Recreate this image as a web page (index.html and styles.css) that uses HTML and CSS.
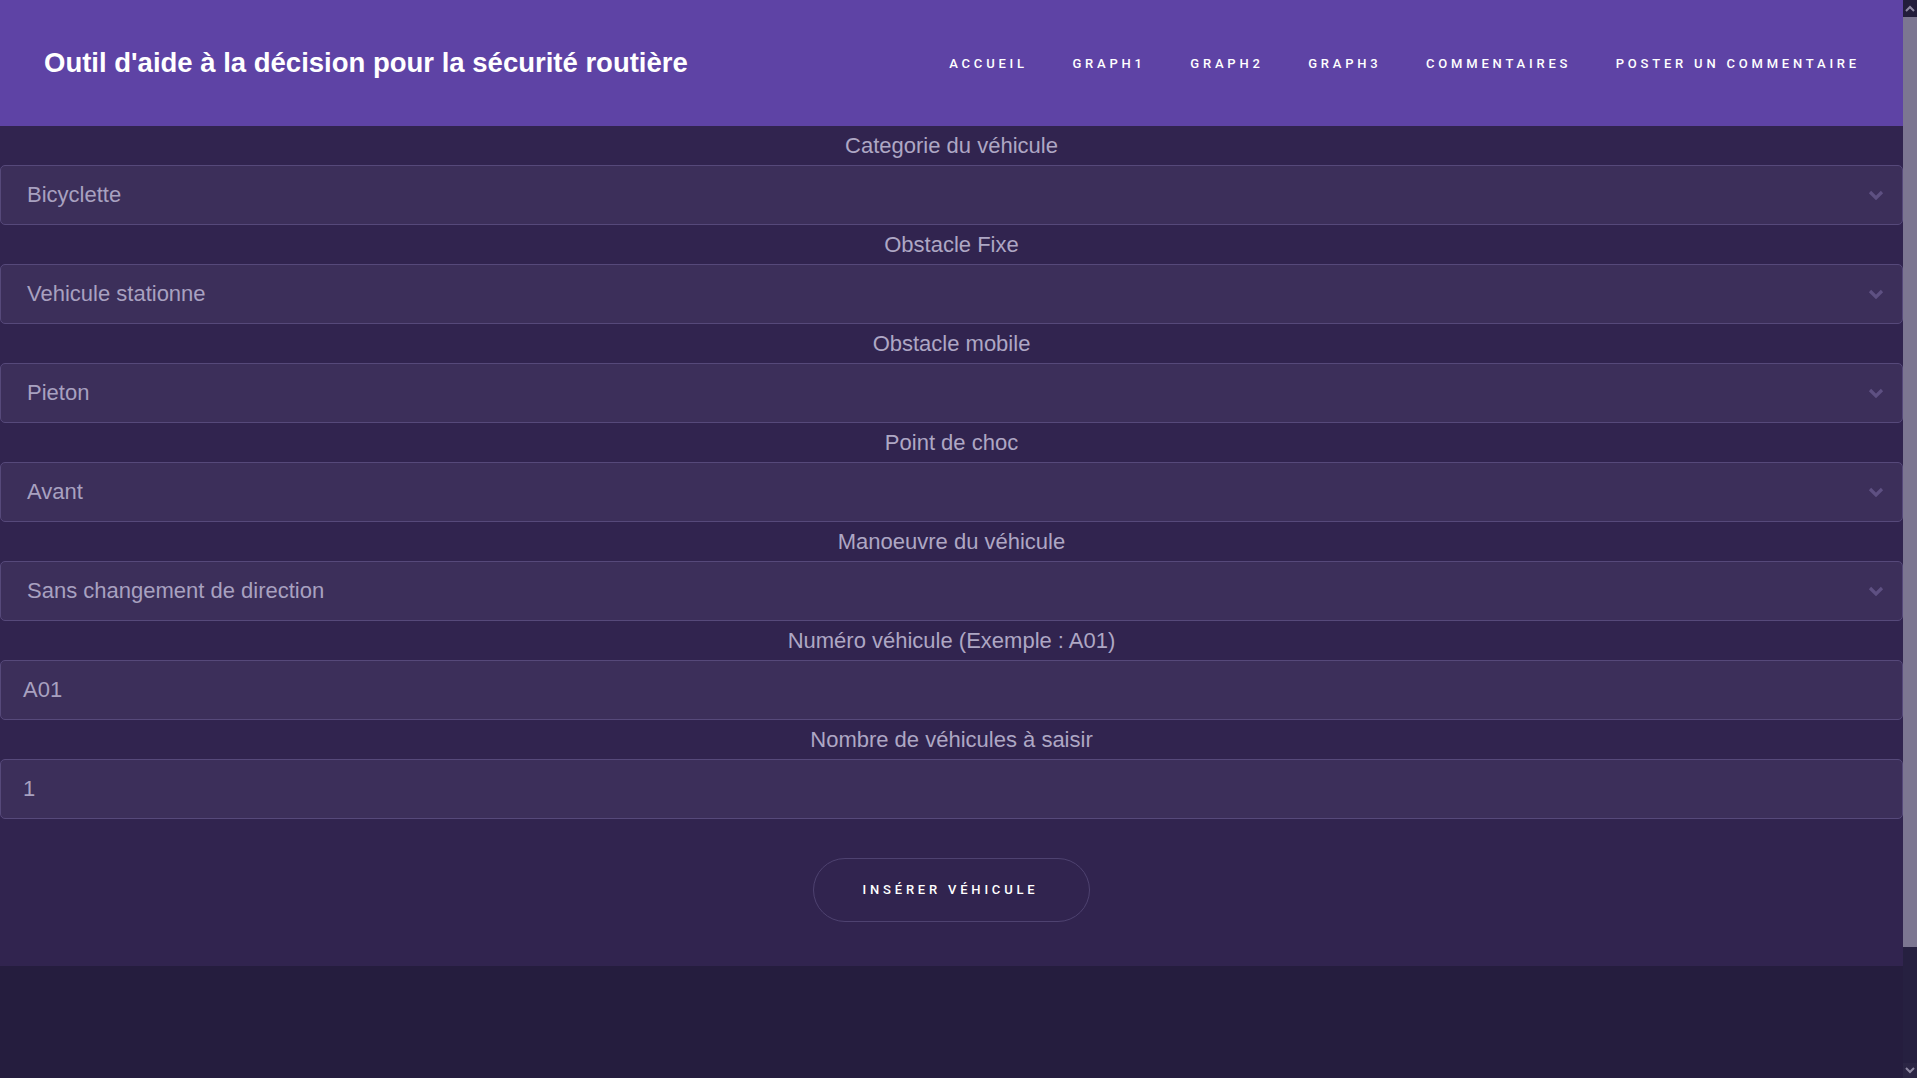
FILE: index.html
```html
<!DOCTYPE html>
<html lang="fr">
<head>
<meta charset="utf-8">
<title>Outil d'aide à la décision pour la sécurité routière</title>
<link rel="stylesheet" href="styles.css">
</head>
<body>
<div class="viewport">
  <div class="page">
    <header class="topbar">
      <h1 class="brand">Outil d'aide à la décision pour la sécurité routière</h1>
      <nav class="nav">
        <a class="nav-link" href="#">Accueil</a>
        <a class="nav-link" href="#">Graph1</a>
        <a class="nav-link" href="#">Graph2</a>
        <a class="nav-link" href="#">Graph3</a>
        <a class="nav-link" href="#">Commentaires</a>
        <a class="nav-link" href="#">Poster un commentaire</a>
      </nav>
    </header>
    <main class="form">
      <div class="field">
        <label class="field-label">Categorie du véhicule</label>
        <div class="box select"><span>Bicyclette</span><svg class="chev" width="16" height="10" viewBox="0 0 16 10"><polyline points="2,2 8,8 14,2" fill="none" stroke="#5e5082" stroke-width="3.2"/></svg></div>
      </div>
      <div class="field">
        <label class="field-label">Obstacle Fixe</label>
        <div class="box select"><span>Vehicule stationne</span><svg class="chev" width="16" height="10" viewBox="0 0 16 10"><polyline points="2,2 8,8 14,2" fill="none" stroke="#5e5082" stroke-width="3.2"/></svg></div>
      </div>
      <div class="field">
        <label class="field-label">Obstacle mobile</label>
        <div class="box select"><span>Pieton</span><svg class="chev" width="16" height="10" viewBox="0 0 16 10"><polyline points="2,2 8,8 14,2" fill="none" stroke="#5e5082" stroke-width="3.2"/></svg></div>
      </div>
      <div class="field">
        <label class="field-label">Point de choc</label>
        <div class="box select"><span>Avant</span><svg class="chev" width="16" height="10" viewBox="0 0 16 10"><polyline points="2,2 8,8 14,2" fill="none" stroke="#5e5082" stroke-width="3.2"/></svg></div>
      </div>
      <div class="field">
        <label class="field-label">Manoeuvre du véhicule</label>
        <div class="box select"><span>Sans changement de direction</span><svg class="chev" width="16" height="10" viewBox="0 0 16 10"><polyline points="2,2 8,8 14,2" fill="none" stroke="#5e5082" stroke-width="3.2"/></svg></div>
      </div>
      <div class="field">
        <label class="field-label">Numéro véhicule (Exemple : A01)</label>
        <div class="box input"><span>A01</span></div>
      </div>
      <div class="field">
        <label class="field-label">Nombre de véhicules à saisir</label>
        <div class="box input"><span>1</span></div>
      </div>
      <div class="actions">
        <button class="btn" type="button">Insérer véhicule</button>
      </div>
    </main>
  </div>
  <div class="scrollbar">
    <div class="sb-btn"><svg width="10" height="7" viewBox="0 0 10 7"><polyline points="1,6 5,2 9,6" fill="none" stroke="#8f89a3" stroke-width="2"/></svg></div>
    <div class="sb-thumb"></div>
    <div class="sb-track"></div>
    <div class="sb-btn sb-btn-down"><svg width="10" height="7" viewBox="0 0 10 7"><polyline points="1,1 5,5 9,1" fill="none" stroke="#8f89a3" stroke-width="2"/></svg></div>
  </div>
</div>
</body>
</html>
```
FILE: styles.css
```css
* { box-sizing: border-box; }
html, body { margin: 0; padding: 0; height: 100%; overflow: hidden; }
body {
  background: #251d3e;
  font-family: "Liberation Sans", Arial, sans-serif;
}
.viewport {
  display: flex;
  height: 1078px;
}
.page {
  flex: 1;
  min-width: 0;
  display: flex;
  flex-direction: column;
}
.topbar {
  height: 126px;
  background: #5e43a5;
  display: flex;
  align-items: center;
  justify-content: space-between;
  padding: 0 43px 0 44px;
}
.brand {
  margin: 0;
  color: #ffffff;
  font-size: 27.5px;
  font-weight: 700;
  letter-spacing: 0;
}
.nav {
  display: flex;
  gap: 44.5px;
  align-items: center;
}
.nav-link {
  color: #ffffff;
  text-decoration: none;
  text-transform: uppercase;
  font-family: Roboto, "Liberation Sans", sans-serif;
  font-weight: 500;
  font-size: 13px;
  letter-spacing: 3.8px;
}
.form {
  background: #31244f;
  display: flex;
  flex-direction: column;
  padding-bottom: 44px;
}
.field {
  display: flex;
  flex-direction: column;
}
.field-label {
  height: 39px;
  display: flex;
  align-items: center;
  justify-content: center;
  color: #aea7c4;
  font-size: 22px;
}
.box {
  height: 60px;
  background: #3c2f5a;
  border: 1px solid #56497a;
  border-radius: 5px;
  display: flex;
  align-items: center;
  color: #a8a1c0;
  font-size: 22px;
}
.select {
  justify-content: space-between;
  padding: 0 18px 0 26px;
}
.input {
  padding: 0 22px;
}
.actions {
  display: flex;
  justify-content: center;
  padding-top: 39px;
}
.btn {
  width: 277px;
  height: 64px;
  border-radius: 32px;
  border: 1px solid #4e4270;
  background: transparent;
  color: #ffffff;
  font-family: Roboto, "Liberation Sans", sans-serif;
  font-weight: 500;
  font-size: 13px;
  letter-spacing: 3.8px;
  text-transform: uppercase;
  padding: 0 4px 2px 2px;
}
.scrollbar {
  width: 14px;
  display: flex;
  flex-direction: column;
  background: #262040;
}
.sb-btn {
  height: 17px;
  background: #231d3b;
  display: flex;
  align-items: center;
  justify-content: center;
}
.sb-btn-down {
  height: 15px;
  background: #2b2544;
}
.sb-thumb {
  height: 930px;
  background: #7c7691;
}
.sb-track {
  flex: 1;
}
```
